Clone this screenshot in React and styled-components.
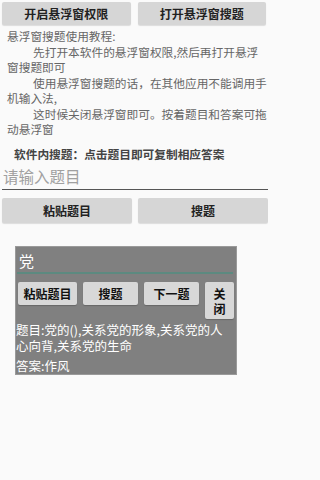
import styled, { createGlobalStyle } from "styled-components";

const GlobalStyle = createGlobalStyle`
  html, body {
    margin: 0;
    padding: 0;
    background: #fafafa;
  }
  body {
    font-family: "Noto Sans CJK SC", "Noto Sans", sans-serif;
    width: 268px;
    height: 480px;
    overflow: hidden;
  }
`;

const Page = styled.div`
  position: relative;
  width: 268px;
  height: 480px;
  background: #fafafa;
`;

const ButtonRow = styled.div`
  display: grid;
  grid-template-columns: 1fr 1fr;
  gap: ${({ gap }) => gap || 7}px;
  padding: ${({ pad }) => pad || "2px 2px 0 2px"};
`;

const GreyButton = styled.button`
  height: ${({ h }) => h || 23}px;
  border: none;
  border-radius: 2px;
  background: #d6d6d6;
  box-shadow: 0 1px 1px rgba(0, 0, 0, 0.12);
  color: #222;
  font-family: inherit;
  font-size: 12px;
  font-weight: bold;
  padding: 0;
  cursor: pointer;
`;

const Guide = styled.div`
  margin-top: 3px;
  padding-left: 7px;
  color: #666;
  font-size: 11.7px;
  line-height: 15.5px;
`;

const Para = styled.p`
  margin: 0;
  text-indent: ${({ indent }) => (indent ? "26px" : "0")};
`;

const Hint = styled.div`
  margin-top: 9px;
  padding-left: 14px;
  color: #444;
  font-size: 11.7px;
  font-weight: bold;
  line-height: 16px;
`;

const QuestionInput = styled.input`
  display: block;
  box-sizing: border-box;
  width: 266px;
  height: 27px;
  margin: 1px 0 0 2px;
  padding: 0 0 0 1px;
  border: none;
  border-bottom: 1px solid #555;
  background: transparent;
  font-family: inherit;
  font-size: 15.5px;
  color: #333;
  outline: none;
  &::placeholder {
    color: #a0a0a0;
  }
`;

const FloatPanel = styled.div`
  position: absolute;
  left: 15px;
  top: 246px;
  width: 222px;
  box-sizing: border-box;
  background: #808080;
  border: 1px solid #9a9a9a;
`;

const PanelInput = styled.div`
  margin: 0 3px 0 1px;
  height: 25px;
  border-bottom: 2px solid #5c8a80;
  color: #fff;
  font-size: 15px;
  line-height: 28px;
  padding-left: 2px;
`;

const PanelButtons = styled.div`
  display: flex;
  align-items: flex-start;
  gap: 6px;
  margin-top: 8px;
  padding-left: 2px;
`;

const PanelButton = styled.button`
  flex: none;
  width: ${({ w }) => w}px;
  height: ${({ h }) => h || 23}px;
  border: none;
  border-radius: 2px;
  background: #d8d8d8;
  box-shadow: 0 1px 1px rgba(0, 0, 0, 0.2);
  color: #111;
  font-family: inherit;
  font-size: 12px;
  font-weight: bold;
  line-height: 15px;
  padding: 0 ${({ px }) => px || 0}px;
  white-space: ${({ px }) => (px ? "normal" : "nowrap")};
  cursor: pointer;
`;

const PanelText = styled.div`
  margin-top: ${({ top }) => top}px;
  padding-right: 8px;
  color: #fff;
  font-size: 12.5px;
  line-height: 16px;
`;

export default function App() {
  return (
    <Page>
      <GlobalStyle />
      <ButtonRow>
        <GreyButton>开启悬浮窗权限</GreyButton>
        <GreyButton>打开悬浮窗搜题</GreyButton>
      </ButtonRow>

      <Guide>
        <Para>悬浮窗搜题使用教程:</Para>
        <Para indent>先打开本软件的悬浮窗权限,然后再打开悬浮窗搜题即可</Para>
        <Para indent>使用悬浮窗搜题的话，在其他应用不能调用手机输入法,</Para>
        <Para indent>这时候关闭悬浮窗即可。按着题目和答案可拖动悬浮窗</Para>
      </Guide>

      <Hint>软件内搜题：点击题目即可复制相应答案</Hint>
      <QuestionInput placeholder="请输入题目" />

      <ButtonRow gap={6} pad="8px 0 0 2px">
        <GreyButton h={25}>粘贴题目</GreyButton>
        <GreyButton h={25}>搜题</GreyButton>
      </ButtonRow>

      <FloatPanel>
        <PanelInput>党</PanelInput>
        <PanelButtons>
          <PanelButton w={59}>粘贴题目</PanelButton>
          <PanelButton w={55}>搜题</PanelButton>
          <PanelButton w={55}>下一题</PanelButton>
          <PanelButton w={29} h={37} px={7}>关闭</PanelButton>
        </PanelButtons>
        <PanelText top={3}>题目:党的(),关系党的形象,关系党的人心向背,关系党的生命</PanelText>
        <PanelText top={4}>答案:作风</PanelText>
      </FloatPanel>
    </Page>
  );
}
